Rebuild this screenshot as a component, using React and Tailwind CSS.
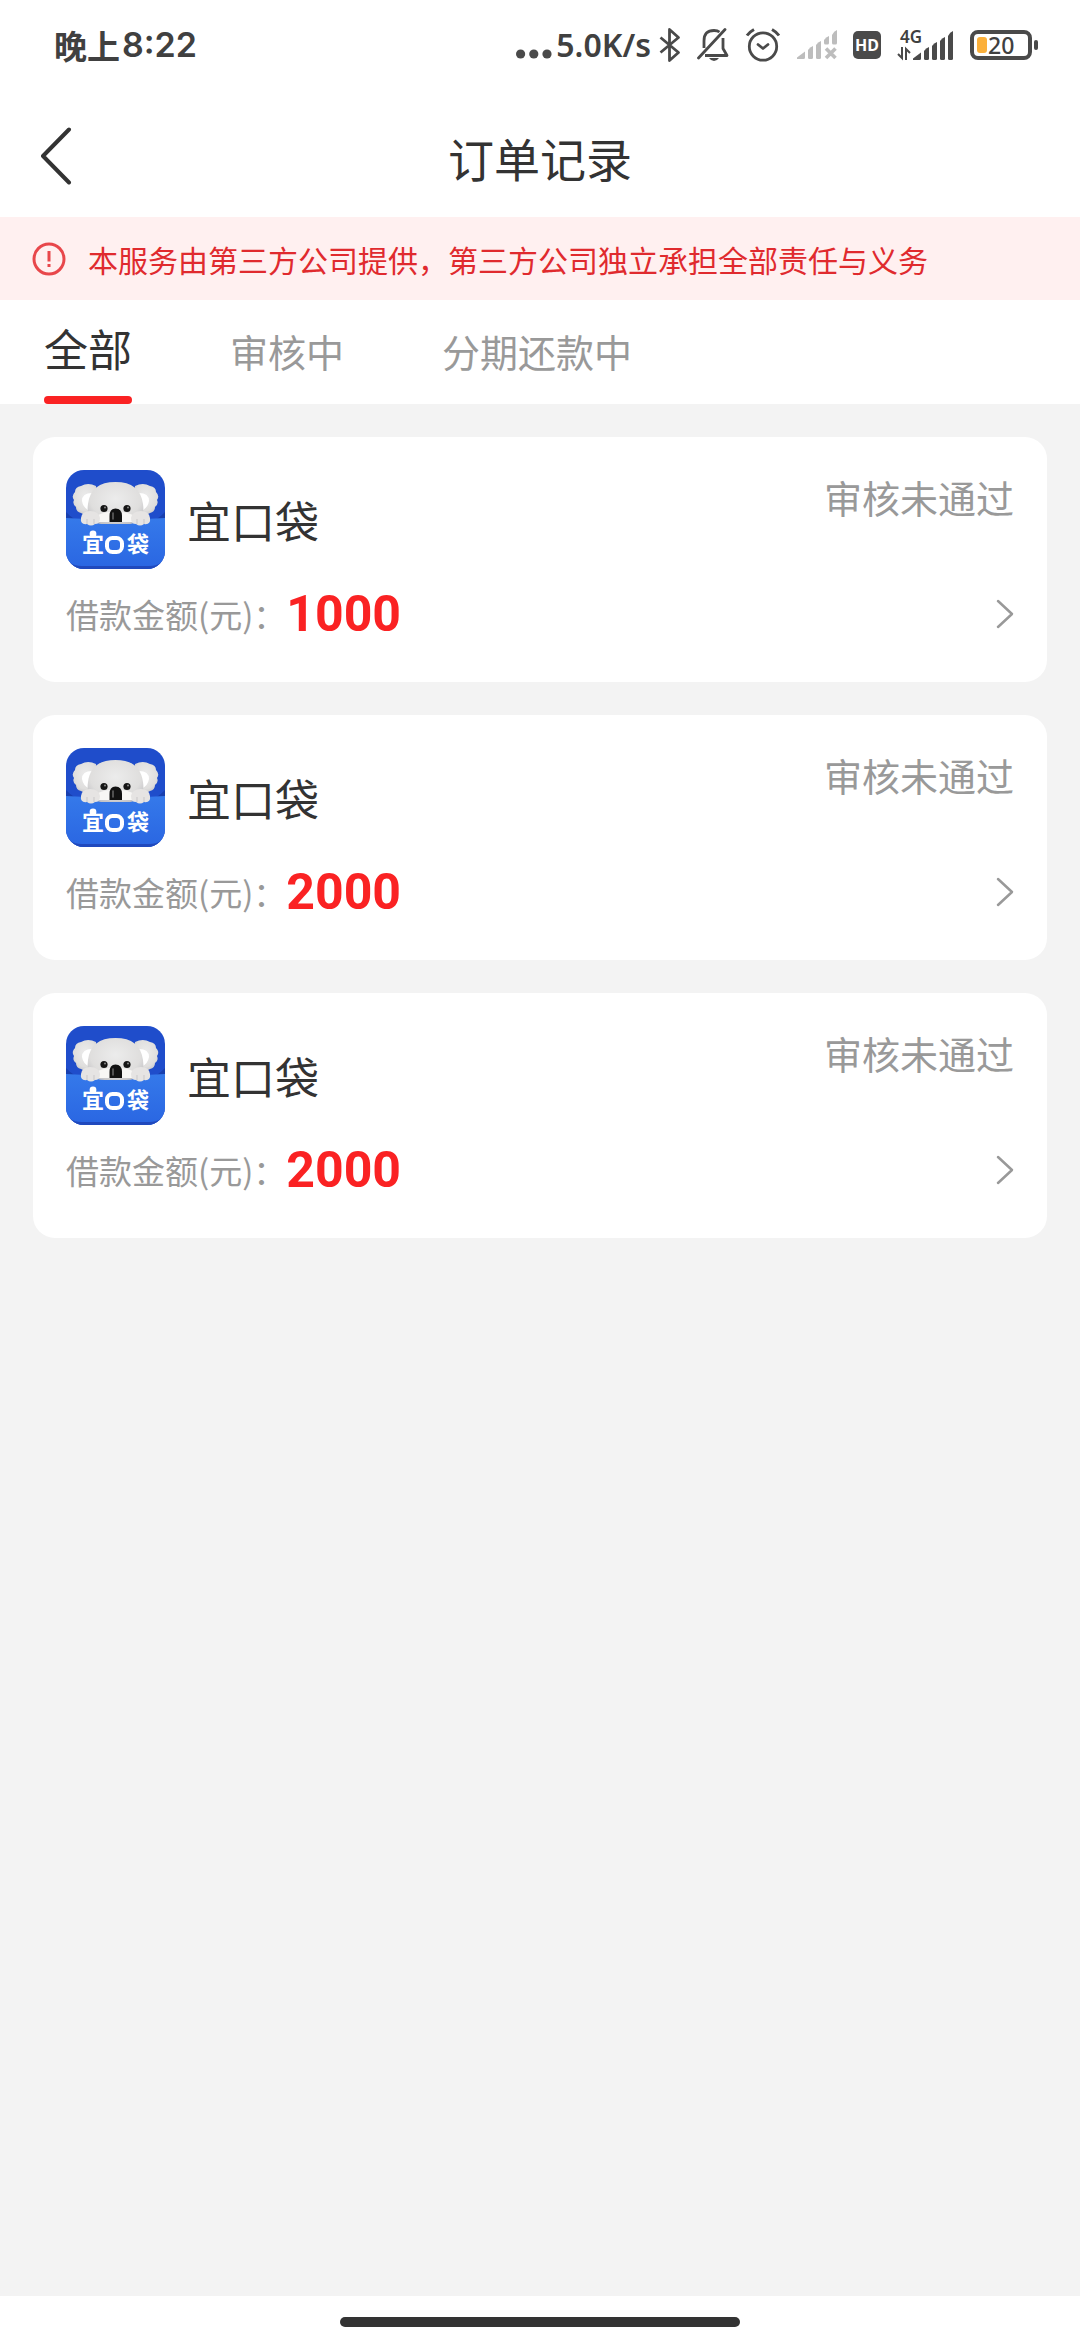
import { useState } from 'react'

const tabs = ['全部', '审核中', '分期还款中']

const orders = [
  { id: 1, name: '宜口袋', amount: 1000, status: '审核未通过' },
  { id: 2, name: '宜口袋', amount: 2000, status: '审核未通过' },
  { id: 3, name: '宜口袋', amount: 2000, status: '审核未通过' }
]

// Full set of slanted signal bars
const SignalBars = () => (
  <svg width="41" height="30" viewBox="0 0 41 30" fill="#4a4a4a">
    <path d="M0 29 L0 27.5 Q4 24.5 8 21.5 V27.5 Q8 29 6.5 29 Z" />
    <path d="M11 20 Q13 17 16 16 V27.5 Q16 29 14.5 29 H12.5 Q11 29 11 27.5 Z" />
    <path d="M19 15 Q21 12 24 11 V27.5 Q24 29 22.5 29 H20.5 Q19 29 19 27.5 Z" />
    <path d="M27 10 Q29 7 32 6 V27.5 Q32 29 30.5 29 H28.5 Q27 29 27 27.5 Z" />
    <path d="M35 5 Q37 1 40 0 V27.5 Q40 29 38.5 29 H36.5 Q35 29 35 27.5 Z" />
  </svg>
)

const NoSignal = () => (
  <svg width="40" height="30" viewBox="0 0 40 30" fill="#bdbdbd">
    <path d="M0 29 L0 27.5 Q4 24.5 8 21.5 V27.5 Q8 29 6.5 29 Z" />
    <path d="M11 20 Q13 17 16 16 V27.5 Q16 29 14.5 29 H12.5 Q11 29 11 27.5 Z" />
    <path d="M19 15 Q21 12 24 11 V27.5 Q24 29 22.5 29 H20.5 Q19 29 19 27.5 Z" />
    <path d="M27 10 Q29 7 32 6 V13 Q32 14.5 30.5 14.5 H28.5 Q27 14.5 27 13 Z" />
    <path d="M35 5 Q37 1 40 0 V13 Q40 14.5 38.5 14.5 H36.5 Q35 14.5 35 13 Z" />
    <path d="M29 18.5 L38.5 28 M38.5 18.5 L29 28" stroke="#bdbdbd" strokeWidth="3.6" />
  </svg>
)

const Bluetooth = () => (
  <svg width="22" height="36" viewBox="0 0 22 36" fill="none" stroke="#4a4a4a" strokeWidth="2.8" strokeLinejoin="round">
    <path d="M1.5 10.5 L19.5 25.5 L10.5 33.5 V2.5 L19.5 10.5 L1.5 25.5" />
  </svg>
)

const BellOff = () => (
  <svg width="32" height="36" viewBox="0 0 32 36" fill="none" stroke="#4a4a4a" strokeWidth="2.8" strokeLinejoin="round">
    <path d="M7 21 V14 Q7 3.5 17 3.5 Q20.500 3.500 22.500 5" />
    <path d="M26 11 V21.5 L30 28.5 H8" />
    <path d="M28 2.5 L1.5 31" strokeLinecap="round" />
    <path d="M12 31 H22 Q20 34 17 34 Q14 34 12 31 Z" fill="#4a4a4a" stroke="none" />
  </svg>
)

const Alarm = () => (
  <svg width="36" height="36" viewBox="0 0 36 36" fill="none" stroke="#4a4a4a" strokeWidth="2.8" strokeLinecap="round">
    <circle cx="18" cy="19.5" r="13.700" />
    <path d="M13 17.5 L18 21.5 L23 17.5" strokeLinejoin="round" />
    <path d="M2 8.500 Q4.5 5 9 2.5 M34 8.5 Q31.5 5 27 2.5" strokeLinecap="butt" strokeWidth="3" />
  </svg>
)

const Mobile4G = () => (
  <div className="flex items-end">
    <div className="flex w-4 flex-col items-start">
      <span className="ml-[3px] h-4 text-[17px] leading-4 font-semibold">4G</span>
      <svg width="14" height="16" viewBox="0 0 14 16" fill="none" stroke="#4a4a4a" strokeWidth="2">
        <path d="M5 2 V13 L1 9 M9 15 V4 L13 8" />
      </svg>
    </div>
    <SignalBars />
  </div>
)

const Battery = () => (
  <div className="flex items-center">
    <div className="flex h-[30px] w-[62px] items-center rounded-lg border-4 border-[#4a4a4a] pl-[3px]">
      <span className="h-4 w-[10px] rounded-[3px] bg-[#fbb03b]" />
      <span className="pl-px text-[23px] leading-[30px] font-medium">20</span>
    </div>
    <span className="ml-[2px] h-[10px] w-1 rounded-full bg-[#4a4a4a]" />
  </div>
)

const StatusBar = () => (
  <div className="flex h-[90px] items-center justify-between pr-[42px] pl-[54px] font-['Noto_Sans',sans-serif] text-[#404040]">
    <div className="flex items-center font-['Noto_Sans_CJK_SC',sans-serif] text-[33px] leading-none font-bold">
      晚上
      <span className="ml-[2px] font-['Inter',sans-serif] text-[34px] font-semibold">8:22</span>
    </div>
    <div className="flex items-center gap-4">
      <div className="flex items-center gap-2">
        <div className="flex items-center gap-1">
          <svg width="36" height="36" viewBox="0 0 36 36" fill="#4a4a4a">
            <circle cx="4.6" cy="27" r="4.6" />
            <circle cx="17.8" cy="27" r="4.6" />
            <circle cx="31" cy="27" r="4.6" />
          </svg>
          <span className="text-[32px] leading-none font-semibold">5.0K/s</span>
        </div>
        <Bluetooth />
      </div>
      <BellOff />
      <Alarm />
      <NoSignal />
      <span className="flex size-7 items-center justify-center rounded-[5px] bg-[#4a4a4a] text-[16px] leading-none font-bold text-white">HD</span>
      <Mobile4G />
      <Battery />
    </div>
  </div>
)

const KoalaLogo = () => (
  <svg className="size-[99px] shrink-0 rounded-[18px]" viewBox="0 0 99 99">
    <defs>
      <linearGradient id="pocket" x1="0" y1="0" x2="0" y2="1">
        <stop offset="0" stopColor="#3579ea" />
        <stop offset="1" stopColor="#2a66e2" />
      </linearGradient>
      <radialGradient id="fur" cx="0.5" cy="0.4" r="0.65">
        <stop offset="0" stopColor="#ececec" />
        <stop offset="0.7" stopColor="#dfdedd" />
        <stop offset="1" stopColor="#c0c0c4" />
      </radialGradient>
    </defs>
    <rect width="99" height="99" fill="#1f4dcb" />
    <path d="M0 42 Q10 53 20 52 H79 Q89 53 99 42 V60 H0 Z" fill="#183fae" />
    <path d="M0 48 Q49 51 99 48 V99 H0 Z" fill="url(#pocket)" />
    <path d="M0 84 Q1 96 16 96 H83 Q98 96 99 84 V99 H0 Z" fill="#2049bd" />
    <g fill="url(#fur)">
      <path d="M30 16 Q22 12 15 16 Q9 17 9 22 Q5 26 8 30 Q6 34 10 37 Q10 42 15 43 Q22 48 32 42 Z" />
      <path d="M69 16 Q77 12 84 16 Q90 17 90 22 Q94 26 91 30 Q93 34 89 37 Q89 42 84 43 Q77 48 67 42 Z" />
    </g>
    <path d="M26 23 Q16 23 16 31 Q17 38 24 41 Z M73 23 Q83 23 83 31 Q82 38 75 41 Z" fill="#fff" />
    <path d="M49.5 12 C66 12 75 19 77 34 Q80 54 60 54 H39 Q19 54 22 34 C24 19 33 12 49.5 12 Z" fill="url(#fur)" />
    <path d="M32 45 Q42 41 49.5 42 Q58 41 67 45 L66 52 H33 Z" fill="#f8f7f5" />
    <g fill="#e6e4e3">
      <path d="M15 48 Q16 41 24 41 Q33 41 34 48 Q34 54 29 54 Q25 57 21 54 Q14 55 15 48 Z" />
      <path d="M84 48 Q83 41 75 41 Q66 41 65 48 Q65 54 70 54 Q74 57 78 54 Q85 55 84 48 Z" />
    </g>
    <path d="M21 49 V54 M28 49 V54 M71 49 V54 M78 49 V54" stroke="#c9c7c8" strokeWidth="1" />
    <circle cx="38" cy="38.5" r="3.6" fill="#151515" />
    <circle cx="61" cy="38.5" r="3.6" fill="#151515" />
    <circle cx="39" cy="37.5" r="1" fill="#888" />
    <circle cx="62" cy="37.5" r="1" fill="#888" />
    <path d="M43.5 46 Q43.5 38.5 49.5 38.5 Q56 38.5 56 46 V52 H43.5 Z" fill="#111" />
    <path d="M47 43 V49" stroke="#666" strokeWidth="1.5" strokeLinecap="round" />
    <g fill="#fff" fontWeight="700" textAnchor="middle" fontFamily="Noto Sans CJK SC, sans-serif">
      <text x="27" y="82" fontSize="22">宜</text>
      <text x="72" y="82" fontSize="22">袋</text>
    </g>
    <circle cx="27" cy="64" r="3.4" fill="#fff" />
    <rect x="41" y="68" width="15" height="14" rx="5.500" fill="none" stroke="#fff" strokeWidth="4" />
  </svg>
)

const OrderCard = ({ order }) => (
  <li className="rounded-[22px] bg-white px-[33px] pt-[33px] pb-[38px]">
    <div className="flex items-start justify-between">
      <div className="flex items-center gap-[22px]">
        <KoalaLogo />
        <h2 className="text-[44px] leading-[60px] text-[#333]">{order.name}</h2>
      </div>
      <span className="text-[38px] leading-[54px] text-[#999]">{order.status}</span>
    </div>
    <a href="#detail" className="mt-[15px] flex h-[60px] items-center justify-between">
      <span className="flex items-center leading-[60px]">
        <span className="text-[33px] text-[#999]">借款金额(元)：</span>
        <span className="font-['Roboto',sans-serif] text-[50px] font-bold text-[#fa2223]">{order.amount}</span>
      </span>
      <svg width="18" height="30" viewBox="0 0 18 30" fill="none" stroke="#999" strokeWidth="2.5" strokeLinecap="round" strokeLinejoin="round">
        <path d="M2 2 L16 15 L2 28" />
      </svg>
    </a>
  </li>
)

export default function App() {
  const [active, setActive] = useState(0)

  return (
    <div className="flex min-h-screen flex-col bg-[#f3f3f3] font-['Noto_Sans_CJK_SC',sans-serif]">
      <header className="bg-white">
        <StatusBar />
        <div className="grid h-[127px] grid-cols-[1fr_auto_1fr] items-start px-10 pt-[37px]">
          <button type="button" aria-label="返回" className="justify-self-start">
            <svg width="32" height="58" viewBox="0 0 32 58" fill="none" stroke="#333" strokeWidth="4" strokeLinecap="round" strokeLinejoin="round">
              <path d="M29 2.5 L3 29 L29 55.5" />
            </svg>
          </button>
          <h1 className="text-[46px] leading-[60px] text-[#333]">订单记录</h1>
        </div>
      </header>

      <div className="flex h-[83px] items-center gap-[22px] bg-[#fff0f0] px-8 text-[#e02a2e]">
        <svg width="34" height="34" viewBox="0 0 34 34" fill="none" stroke="#e8474b" strokeWidth="3">
          <circle cx="17" cy="17" r="15" />
          <path d="M17 9 V19.5 M17 22 V25" />
        </svg>
        <p className="text-[30px] leading-[40px]">本服务由第三方公司提供，第三方公司独立承担全部责任与义务</p>
      </div>

      <nav className="flex h-[104px] items-baseline gap-[98px] bg-white px-11">
        {tabs.map((tab, i) => (
          <button
            key={tab}
            type="button"
            onClick={() => setActive(i)}
            className={
              i === active
                ? 'flex h-[104px] flex-col justify-between pt-[18px] text-[44px] leading-[60px] text-[#333]'
                : 'text-[38px] leading-[60px] text-[#999]'
            }
          >
            {tab}
            {i === active && <span className="h-2 w-full rounded-full bg-[#fa2223]" />}
          </button>
        ))}
      </nav>

      <main className="flex-1 p-[33px]">
        <ul className="flex flex-col gap-[33px]">
          {orders.map((order) => (
            <OrderCard key={order.id} order={order} />
          ))}
        </ul>
      </main>

      <footer className="flex h-11 justify-center bg-white pt-[21px]">
        <div className="h-[10px] w-[37%] rounded-full bg-[#333]" />
      </footer>
    </div>
  )
}
